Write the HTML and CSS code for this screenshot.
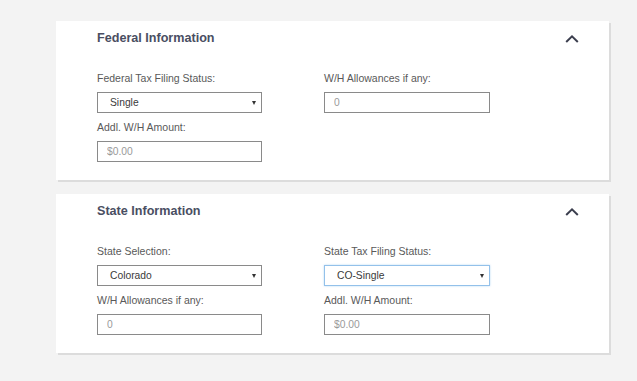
FILE: index.html
```html
<!DOCTYPE html>
<html>
<head>
<meta charset="utf-8">
<link rel="stylesheet" href="styles.css">
</head>
<body>
<div class="page">
  <section class="card">
    <div class="card-head">
      <h2 class="card-title">Federal Information</h2>
      <svg class="chev" width="14" height="8" viewBox="0 0 14 8"><polyline points="1.2,7 7,1.4 12.8,7" fill="none" stroke="#3b3e4e" stroke-width="2"/></svg>
    </div>
    <div class="grid">
      <div class="field">
        <label class="lbl">Federal Tax Filing Status:</label>
        <div class="sel"><span>Single</span><i class="tri"></i></div>
      </div>
      <div class="field">
        <label class="lbl">W/H Allowances if any:</label>
        <input class="inp" placeholder="0">
      </div>
      <div class="field">
        <label class="lbl">Addl. W/H Amount:</label>
        <input class="inp" placeholder="$0.00">
      </div>
    </div>
  </section>
  <section class="card">
    <div class="card-head">
      <h2 class="card-title">State Information</h2>
      <svg class="chev" width="14" height="8" viewBox="0 0 14 8"><polyline points="1.2,7 7,1.4 12.8,7" fill="none" stroke="#3b3e4e" stroke-width="2"/></svg>
    </div>
    <div class="grid">
      <div class="field">
        <label class="lbl">State Selection:</label>
        <div class="sel"><span>Colorado</span><i class="tri"></i></div>
      </div>
      <div class="field">
        <label class="lbl">State Tax Filing Status:</label>
        <div class="sel focus"><span>CO-Single</span><i class="tri"></i></div>
      </div>
      <div class="field">
        <label class="lbl">W/H Allowances if any:</label>
        <input class="inp" placeholder="0">
      </div>
      <div class="field">
        <label class="lbl">Addl. W/H Amount:</label>
        <input class="inp" placeholder="$0.00">
      </div>
    </div>
  </section>
</div>
</body>
</html>
```

FILE: styles.css
```css
* { box-sizing: border-box; }
html, body {
  margin: 0;
  padding: 0;
  background: #f3f3f3;
  font-family: "Liberation Sans", Arial, sans-serif;
}
.page {
  padding: 21px 0 0 56px;
  width: 609px;
}
.card {
  background: #fff;
  box-shadow: 2px 2px 0 #dcdcdc;
  padding: 10px 30px 18px 41px;
  margin-bottom: 14px;
}
.card-head {
  display: flex;
  justify-content: space-between;
  align-items: center;
  height: 15px;
  margin-bottom: 26px;
}
.card-title {
  margin: 0;
  font-size: 12.6px;
  line-height: 15px;
  font-weight: bold;
  color: #4a4e62;
}
.chev {
  display: block;
  margin-top: 1px;
}
.grid {
  display: grid;
  grid-template-columns: 165px 166px;
  column-gap: 62px;
  row-gap: 8px;
}
.field {
  display: flex;
  flex-direction: column;
}
.lbl {
  font-size: 10.5px;
  line-height: 13px;
  color: #595959;
  margin-bottom: 7px;
}
.sel {
  height: 21px;
  border: 1px solid #8a8a8a;
  display: flex;
  align-items: center;
  justify-content: space-between;
  padding: 0 5px 0 12px;
  font-size: 10.3px;
  color: #3a3a3a;
  background: #fff;
}
.sel.focus {
  border-color: #93c1ea;
  box-shadow: 0 0 2px #b9d8f3;
}
.tri {
  width: 0;
  height: 0;
  border-left: 2.5px solid transparent;
  border-right: 2.5px solid transparent;
  border-top: 4px solid #333;
}
.inp {
  height: 21px;
  border: 1px solid #8a8a8a;
  padding: 0 9px;
  font-family: "Liberation Sans", Arial, sans-serif;
  font-size: 10.3px;
  color: #333;
  background: #fff;
  outline: none;
  margin: 0;
  width: 100%;
  border-radius: 0;
}
.inp::placeholder {
  color: #9a9a9a;
}
```
